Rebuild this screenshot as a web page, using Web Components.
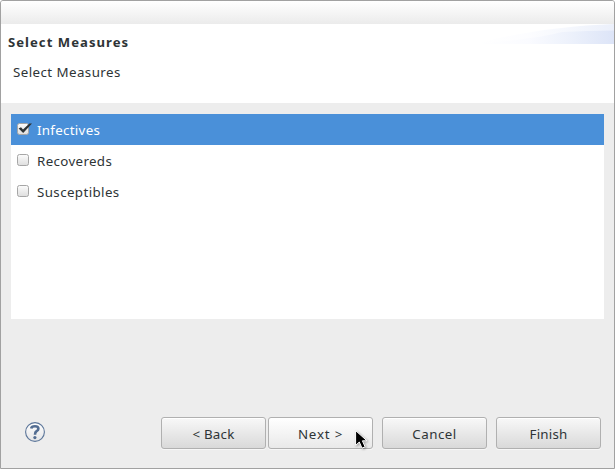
<!DOCTYPE html>
<html lang="en"><head><meta charset="utf-8"><title>Select Measures</title>
<style>html,body{margin:0;width:615px;height:469px;overflow:hidden;background:#fff}</style></head>
<body>
<wizard-window>
 <wizard-header slot="header"><span slot="title">Select Measures</span><span slot="message">Select Measures</span></wizard-header>
 <measure-list>
  <measure-row checked selected style="--ls:.3px">Infectives</measure-row>
  <measure-row style="--ls:.35px">Recovereds</measure-row>
  <measure-row style="--ls:.4px">Susceptibles</measure-row>
 </measure-list>
 <wizard-footer slot="footer">
  <push-button>&lt; Back</push-button>
  <push-button hot style="--ls:.8px">Next &gt;</push-button>
  <push-button class="gap" style="--ls:.5px">Cancel</push-button>
  <push-button class="gap">Finish</push-button>
 </wizard-footer>
</wizard-window>
<mouse-pointer></mouse-pointer>
<script>
function define(name, html){
  const t=document.createElement('template');t.innerHTML=html;
  customElements.define(name,class extends HTMLElement{
    constructor(){super();this.attachShadow({mode:'open'}).append(t.content.cloneNode(true));}
  });
}
define('wizard-window',`<style>
:host{display:flex;flex-direction:column;box-sizing:border-box;width:615px;height:469px;border:1px solid #a1a1a1;border-radius:3px 3px 0 0;background:#ededed;color:#2e3436;font:13.33px "Noto Sans","Open Sans",sans-serif;overflow:hidden}
.bar{height:23px;flex:none;background:linear-gradient(#fff,#ebebeb)}
main{flex:1;padding:11px 10px 0}
</style><div class="bar"></div><slot name="header"></slot><main><slot></slot></main><slot name="footer"></slot>`);
define('wizard-header',`<style>
:host{display:flex;height:79px;flex:none;background:#fff;justify-content:space-between}
.text{display:flex;flex-direction:column;padding:8px 0 0 7px;line-height:20px}
.t{font-weight:700;font-size:13.1px;letter-spacing:1.03px}
.m{padding:10px 0 0 5px;letter-spacing:.43px}
svg{display:block;flex:none}
</style><div class="text"><div class="t"><slot name="title"></slot></div><div class="m"><slot name="message"></slot></div></div>
<svg width="138" height="20" viewBox="0 0 138 20"><defs><linearGradient id="g"><stop offset="0" stop-color="#fff"/><stop offset=".38" stop-color="#fafbff"/><stop offset=".7" stop-color="#ebf0fb"/><stop offset="1" stop-color="#dbe3f7"/></linearGradient></defs>
<path d="M0 20C38 9 88 2 138 0V20Z" fill="url(#g)" opacity=".55"/><path d="M0 20Q66 14 86 8Q112 6.5 138 6.5V20Z" fill="url(#g)" opacity=".9"/></svg>`);
define('measure-list',`<style>:host{display:block;height:205px;background:#fff}</style><slot></slot>`);
define('measure-row',`<style>
:host{display:flex;box-sizing:border-box;height:31px;align-items:center;padding:0 0 2px 6px;letter-spacing:var(--ls)}
:host([selected]){background:#4a90d9;color:#fff}
svg{flex:none;width:16px;height:14px;margin-right:4px;overflow:visible}
.tick{display:none}:host([checked]) .tick{display:block}
span{padding-top:2px;line-height:20px}
</style><svg viewBox="0 0 16 14"><defs><linearGradient id="b" x2="0" y2="1"><stop stop-color="#fcfcfc"/><stop offset="1" stop-color="#dedede"/></linearGradient></defs><rect x=".5" y="1.5" width="11" height="11" rx="2" fill="url(#b)" stroke="#a6a6a6"/><path class="tick" d="M1.6 6.4L4 5.2L6 7.4L12.4 1.4H15L6.2 11Z" fill="#2e3436"/></svg><span><slot></slot></span>`);
define('wizard-footer',`<style>
:host{display:flex;box-sizing:border-box;height:51px;flex:none;align-items:flex-start;padding:0 13px 0 24px}
.help{width:20px;height:20px;margin:5px auto 0 0;flex:none}
::slotted(push-button){margin-left:2px}::slotted(.gap){margin-left:9px}
</style><svg class="help" viewBox="0 0 20 20"><defs><linearGradient id="h" x2="0" y2="1"><stop stop-color="#fff"/><stop offset="1" stop-color="#e3e4e6"/></linearGradient></defs><circle cx="10" cy="10" r="9.4" fill="url(#h)" stroke="#5b7599" stroke-width="1.1"/><path d="M6.2 6.4Q6.6 4.2 10 4.2Q13.4 4.2 13.4 6.8Q13.4 8.2 11.6 9.2Q10 10.2 10 12.8" fill="none" stroke="#536d92" stroke-width="2.6"/><circle cx="9.9" cy="15.6" r="1.6" fill="#536d92"/></svg><slot></slot>`);
define('push-button',`<style>
:host{display:flex;box-sizing:border-box;width:105px;height:32px;align-items:center;justify-content:center;border:1px solid #b0b0b0;border-radius:3px;background:linear-gradient(#f8f8f8,#d9d9d9);box-shadow:0 1px #f7f7f7,inset 0 1px #fff;letter-spacing:var(--ls,.2px)}
:host([hot]){background:linear-gradient(#fff,#e9e9e9)}
span{padding-top:2px;line-height:20px}
</style><span><slot></slot></span>`);
define('mouse-pointer',`<style>:host{position:absolute;left:355px;top:430px;width:16px;height:20px;filter:drop-shadow(1px 1px 1px #0005)}svg{display:block}</style>
<svg width="16" height="20" viewBox="0 0 16 20"><path d="M.6 .6V15.4L4.3 12L7 18.2L10.1 16.8L7.4 10.8H12Z" fill="#000" stroke="#fff" stroke-width="1"/></svg>`);
</script></body></html>
